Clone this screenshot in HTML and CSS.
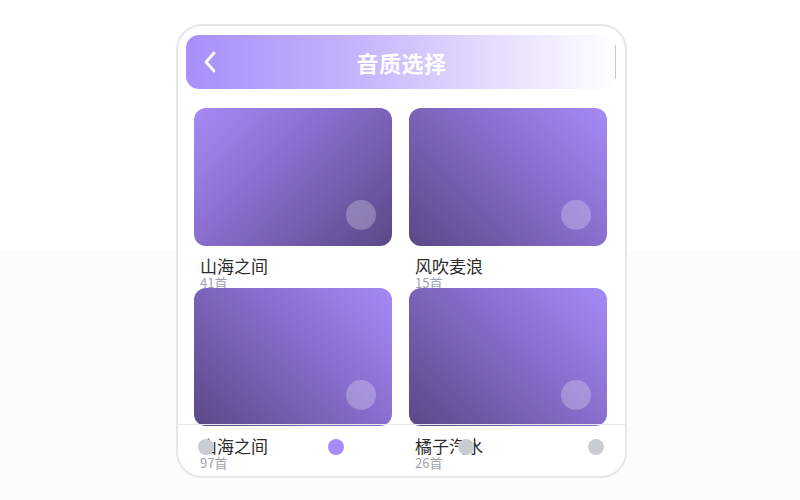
FILE: index.html
```html
<!DOCTYPE html>
<html lang="zh-CN">
<head>
  <meta charset="utf-8">
  <title>音质选择</title>
  <link rel="stylesheet" href="styles.css">
</head>
<body>
  <div class="phone">
    <div class="header">
      <svg class="back" width="16" height="24" viewBox="0 0 16 24">
        <path d="M12 3 L4 12 L12 21" fill="none" stroke="#fff" stroke-width="2.8" stroke-linecap="round" stroke-linejoin="round"/>
      </svg>
      <h1>音质选择</h1>
    </div>

    <div class="grid">
      <div class="card">
        <div class="cover cover-tl"><span class="dot"></span></div>
        <div class="meta">
          <div class="name">山海之间</div>
          <div class="count">41首</div>
        </div>
      </div>
      <div class="card">
        <div class="cover cover-tr"><span class="dot"></span></div>
        <div class="meta">
          <div class="name">风吹麦浪</div>
          <div class="count">15首</div>
        </div>
      </div>
      <div class="card">
        <div class="cover cover-tr"><span class="dot"></span></div>
        <div class="meta">
          <div class="name">山海之间</div>
          <div class="count">97首</div>
        </div>
      </div>
      <div class="card">
        <div class="cover cover-tr"><span class="dot"></span></div>
        <div class="meta">
          <div class="name">橘子汽水</div>
          <div class="count">26首</div>
        </div>
      </div>
    </div>

    <div class="tabbar">
      <span class="tab"></span>
      <span class="tab active"></span>
      <span class="tab"></span>
      <span class="tab"></span>
    </div>
  </div>
</body>
</html>
```

FILE: styles.css
```css
html, body {
  margin: 0;
  height: 100%;
}
body {
  font-family: "Noto Sans CJK SC", "Noto Sans", sans-serif;
  background: linear-gradient(to bottom, #ffffff 0, #ffffff 250px, #fcfcfd 250px);
}
.phone {
  position: relative;
  box-sizing: border-box;
  width: 451px;
  height: 454px;
  margin: 24px 0 0 176px;
  border: 2px solid #e6e7eb;
  border-radius: 26px;
  background: #fff;
  overflow: hidden;
}
.header {
  position: relative;
  display: flex;
  align-items: center;
  justify-content: center;
  height: 54px;
  margin: 9px 8px 0 8px;
  border-radius: 13px;
  background: linear-gradient(to right, #a88ff9 0%, #c4b5fc 40%, #e6defd 72%, #ffffff 100%);
}
.header::after {
  content: "";
  position: absolute;
  right: 1px;
  top: 10px;
  bottom: 10px;
  width: 1px;
  background: #c9bdf8;
}
.back {
  position: absolute;
  left: 16px;
  top: 15px;
}
.header h1 {
  margin: 0;
  color: #fff;
  font-size: 22px;
  font-weight: bold;
  letter-spacing: 0.5px;
}
.grid {
  display: grid;
  grid-template-columns: 198px 198px;
  column-gap: 17px;
  padding: 19px 0 0 16px;
}
.card {
  display: flex;
  flex-direction: column;
  height: 180px;
}
.cover {
  position: relative;
  height: 138px;
  border-radius: 12px;
  z-index: 1;
}
.cover-tl {
  background: linear-gradient(135deg, #a68af5 0%, #8a6fcf 40%, #5b4887 100%);
}
.cover-tr {
  background: linear-gradient(-135deg, #a68af5 0%, #8a6fcf 40%, #5b4887 100%);
}
.dot {
  position: absolute;
  right: 16px;
  bottom: 16px;
  width: 30px;
  height: 30px;
  border-radius: 50%;
  background: rgba(255, 255, 255, 0.25);
}
.meta {
  height: 42px;
  padding: 10px 0 0 6px;
  box-sizing: border-box;
}
.name {
  font-size: 17px;
  line-height: 20px;
  color: #2b2b2b;
}
.count {
  font-size: 13px;
  line-height: 13px;
  color: #9ca3af;
}
.tabbar {
  position: absolute;
  left: 0;
  right: 0;
  bottom: 0;
  height: 52px;
  display: flex;
  justify-content: space-between;
  align-items: flex-start;
  padding: 14px 21px 0 20px;
  box-sizing: border-box;
  border-top: 1px solid #e8e9ec;
  z-index: 2;
}
.tab {
  width: 16px;
  height: 16px;
  border-radius: 50%;
  background: #c9ccd1;
}
.tab.active {
  background: #a78bfa;
}
```
